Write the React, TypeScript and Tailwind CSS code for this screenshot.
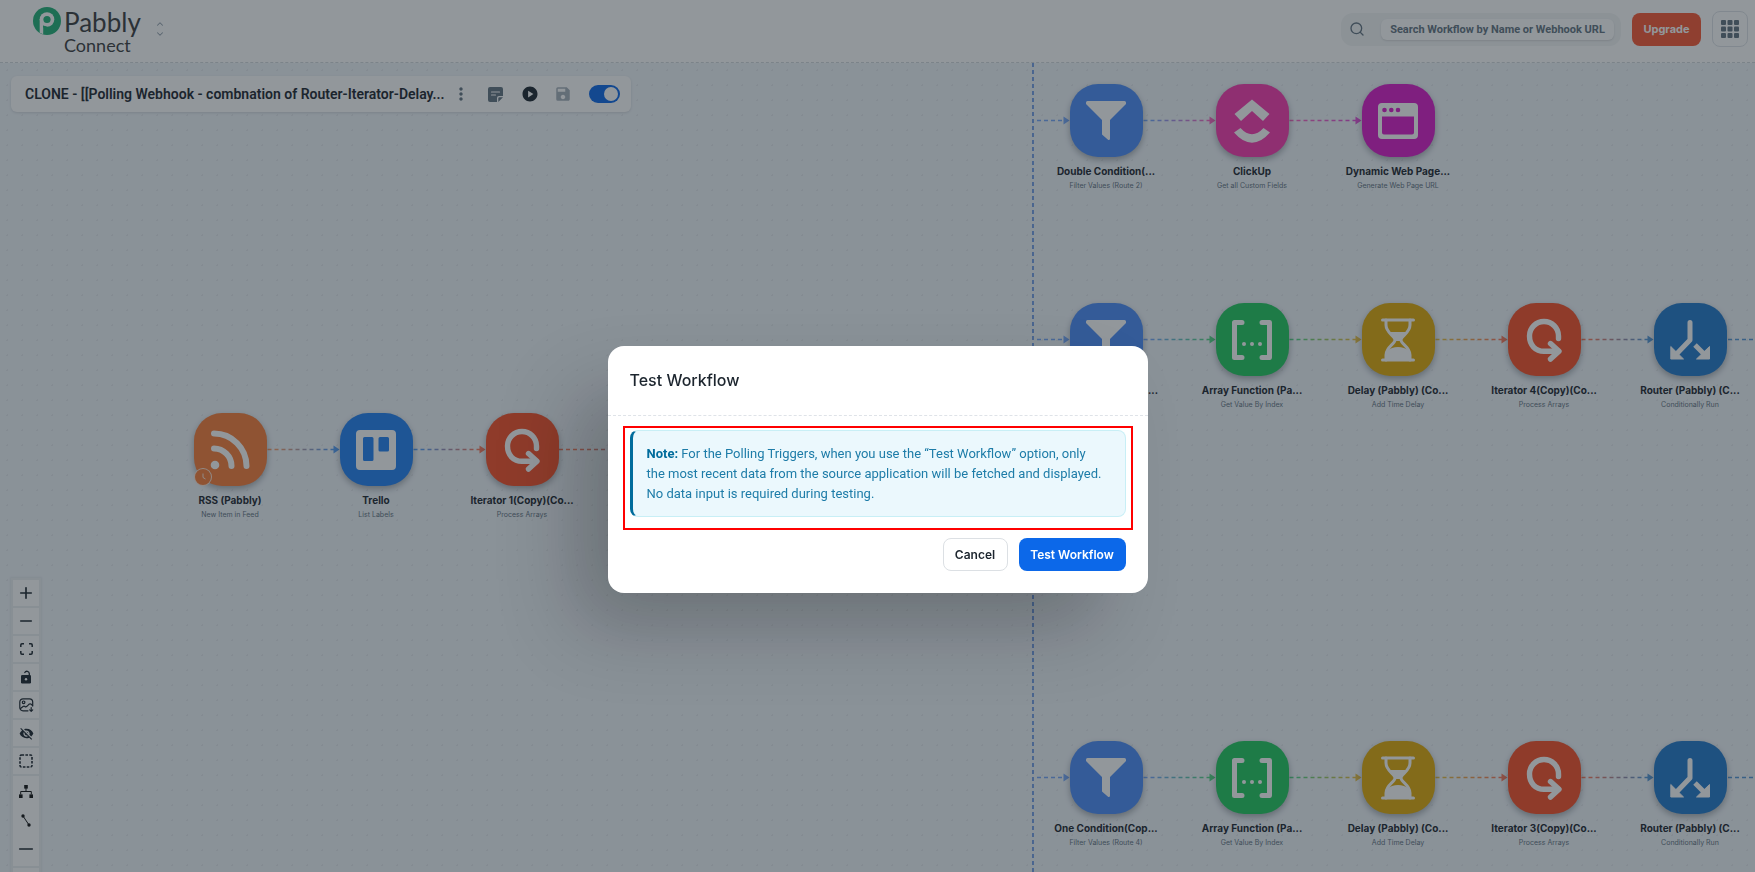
import { useState, type ReactNode } from "react";
import { ChevronDown, ChevronUp, Minus, Plus, Search } from "lucide-react";
import { MdMoreVert, MdPlayCircle, MdSave, MdVisibilityOff } from "react-icons/md";

//
// --- Canvas data ---
//

type Kind = "rss" | "trello" | "iterator" | "filter" | "clickup" | "webpage" | "array" | "delay" | "router";

interface WorkflowNode {
  id: string;
  kind: Kind;
  x: number;
  y: number;
  title: string;
  subtitle: string;
}

const COLORS: Record<Kind, string> = {
  rss: "#f97d38",
  trello: "#2280f4",
  iterator: "#f95028",
  filter: "#4c8dfa",
  clickup: "#f938af",
  webpage: "#da19ca",
  array: "#22ca5e",
  delay: "#e2ab08",
  router: "#2279cc",
};

const NODE = 73;
const TRUNK_X = 1033;

// x and y are the centre of the tile
const rows: WorkflowNode[][] = [
  [
    { id: "rss", kind: "rss", x: 230, y: 386, title: "RSS (Pabbly)", subtitle: "New Item in Feed" },
    { id: "trello", kind: "trello", x: 376, y: 386, title: "Trello", subtitle: "List Labels" },
    { id: "it1", kind: "iterator", x: 522, y: 386, title: "Iterator 1(Copy)(Co...", subtitle: "Process Arrays" },
  ],
  [
    { id: "f2", kind: "filter", x: 1106, y: 57, title: "Double Condition(...", subtitle: "Filter Values (Route 2)" },
    { id: "cu", kind: "clickup", x: 1252, y: 57, title: "ClickUp", subtitle: "Get all Custom Fields" },
    { id: "wp", kind: "webpage", x: 1398, y: 57, title: "Dynamic Web Page...", subtitle: "Generate Web Page URL" },
  ],
  [
    { id: "f3", kind: "filter", x: 1106, y: 276, title: "Two Condition(Cop...", subtitle: "Filter Values (Route 3)" },
    { id: "a3", kind: "array", x: 1252, y: 276, title: "Array Function (Pa...", subtitle: "Get Value By Index" },
    { id: "d3", kind: "delay", x: 1398, y: 276, title: "Delay (Pabbly) (Co...", subtitle: "Add Time Delay" },
    { id: "i3", kind: "iterator", x: 1544, y: 276, title: "Iterator 4(Copy)(Co...", subtitle: "Process Arrays" },
    { id: "r3", kind: "router", x: 1690, y: 276, title: "Router (Pabbly) (C...", subtitle: "Conditionally Run" },
  ],
  [
    { id: "f4", kind: "filter", x: 1106, y: 714, title: "One Condition(Cop...", subtitle: "Filter Values (Route 4)" },
    { id: "a4", kind: "array", x: 1252, y: 714, title: "Array Function (Pa...", subtitle: "Get Value By Index" },
    { id: "d4", kind: "delay", x: 1398, y: 714, title: "Delay (Pabbly) (Co...", subtitle: "Add Time Delay" },
    { id: "i4", kind: "iterator", x: 1544, y: 714, title: "Iterator 3(Copy)(Co...", subtitle: "Process Arrays" },
    { id: "r4", kind: "router", x: 1690, y: 714, title: "Router (Pabbly) (C...", subtitle: "Conditionally Run" },
  ],
];

//
// --- Icons ---
//

const GLYPHS: Record<Kind, ReactNode> = {
  rss: (
    <g fill="none" stroke="#fff" strokeWidth="6" strokeLinecap="round">
      <circle cx="5" cy="35" r="4.3" fill="#fff" stroke="none" />
      <path d="M4 18.500a17.500 17.500 0 0 1 17.500 17.500" />
      <path d="M4 3.500a32.500 32.500 0 0 1 32.500 32.500" />
    </g>
  ),
  trello: (
    <path
      fill="#fff"
      fillRule="evenodd"
      d="M4 0h32a4 4 0 0 1 4 4v32a4 4 0 0 1-4 4H4a4 4 0 0 1-4-4V4a4 4 0 0 1 4-4zM8.500 7a1.500 1.500 0 0 0-1.500 1.500v21a1.500 1.500 0 0 0 1.500 1.500h7.500a1.500 1.500 0 0 0 1.500-1.500v-21A1.500 1.500 0 0 0 16 7zM24 7a1.500 1.500 0 0 0-1.500 1.500v11.500a1.500 1.500 0 0 0 1.500 1.500h7.500A1.500 1.500 0 0 0 33 20V8.500A1.500 1.500 0 0 0 31.500 7z"
    />
  ),
  iterator: (
    <g fill="none" stroke="#fff" strokeWidth="5.400" strokeLinecap="round" strokeLinejoin="round">
      <path d="M34.500 18.500V16A14.500 14.500 0 0 0 5.500 16c0 9 6 15.300 14.500 15.300h14" />
      <path d="M26.500 23.500l8.500 7.800-8.500 7.800" />
    </g>
  ),
  filter: <path fill="#fff" d="M1.500 0h37q1.500 0 1.500 1.500v1.500L24 19v18.500q0 2-1.700 1.500L16 33.500V19L0 3V1.500Q0 0 1.500 0z" />,
  clickup: (
    <path fill="#fff" d="M20-1.500L37.500 13 31 20 20 10 9 20 2.500 13zM2 31.500L8.500 27Q20 39.500 31.500 27L38 31.500Q20 52 2 31.500z" />
  ),
  webpage: (
    <path
      fill="#fff"
      fillRule="evenodd"
      d="M4 2h32a4 4 0 0 1 4 4v28a4 4 0 0 1-4 4H4a4 4 0 0 1-4-4V6a4 4 0 0 1 4-4zM4 15.500v16a2 2 0 0 0 2 2h28a2 2 0 0 0 2-2v-16zM6.500 6.700a2.300 2.300 0 1 0 0 4.600 2.300 2.300 0 0 0 0-4.600zM13.300 6.700a2.300 2.300 0 1 0 0 4.600 2.300 2.300 0 0 0 0-4.600zM20 6.700a2.300 2.300 0 1 0 0 4.600 2.300 2.300 0 0 0 0-4.600z"
    />
  ),
  array: (
    <g fill="#fff">
      <path
        fill="none"
        stroke="#fff"
        strokeWidth="5"
        strokeLinecap="round"
        strokeLinejoin="round"
        d="M10 2.500H2.500v35H10M30 2.500h7.500v35H30"
      />
      <circle cx="12" cy="24" r="2" />
      <circle cx="20" cy="24" r="2" />
      <circle cx="28" cy="24" r="2" />
    </g>
  ),
  delay: (
    <g fill="none" stroke="#fff" strokeWidth="3" strokeLinecap="round" strokeLinejoin="round">
      <path d="M4.500 0h31M4.500 40h31" />
      <path d="M8 0v5c0 8 9 11 9 15s-9 7-9 15v5M32 0v5c0 8-9 11-9 15s9 7 9 15v5" />
      <path fill="#fff" stroke="none" d="M10 12h20c-2 4-7 5-8 9h-4c-1-4-6-5-8-9zM8 40v-8q3-3 6-4 6-2 12 0 3 1 6 4v8z" />
    </g>
  ),
  router: (
    <g fill="#fff" stroke="#fff" strokeLinejoin="round">
      <path fill="none" strokeWidth="5" strokeLinecap="round" d="M20 2.500V20L7 33.500" />
      <path fill="none" strokeWidth="5" d="M25 25l9 9" />
      <path strokeWidth="1" d="M.8 26.500v12.500H13.500zM39.500 26.500v12.500H26.500z" />
    </g>
  ),
};

function PabblyMark() {
  return (
    <svg viewBox="0 0 28 28" className="size-7" aria-hidden="true">
      <circle cx="14" cy="14" r="14" fill="#21b177" />
      <circle cx="14" cy="12.500" r="7.300" fill="#fff" />
      <path fill="#fff" d="M6.700 12h3.500v15.200l-3.500-1.400z" />
      <path fill="#21b177" d="M10.200 18.500l4 1.200-4 1z" />
      <circle cx="14" cy="12.500" r="3.600" fill="#21b177" />
    </svg>
  );
}

function NoteIcon() {
  return (
    <svg viewBox="0 0 15 15" className="size-[15px]" aria-hidden="true">
      <path
        fill="#637381"
        d="M2 0h11a2 2 0 0 1 2 2v7h-4a2 2 0 0 0-2 2v4H2a2 2 0 0 1-2-2V2a2 2 0 0 1 2-2zM10.300 15v-3.700a1 1 0 0 1 1-1H15z"
      />
      <path stroke="#fff" strokeWidth="1.200" strokeLinecap="round" d="M3.500 5h8M3.500 8h4" />
    </svg>
  );
}

function UnlockIcon() {
  return (
    <svg viewBox="0 0 12 14" className="h-3.5 w-3" aria-hidden="true">
      <path fill="none" stroke="#1c252e" strokeWidth="1.300" strokeLinecap="round" d="M9.300 5V3.500a2.400 2.400 0 0 0-4.500-1" />
      <rect x="1" y="5" width="10" height="8.500" rx="1.200" fill="#1c252e" />
      <circle cx="6" cy="9.200" r="1.200" fill="#fff" />
    </svg>
  );
}

function FitIcon() {
  return (
    <svg viewBox="0 0 13 12" className="h-3 w-[13px]" fill="none" stroke="#1c252e" strokeWidth="1.500" aria-hidden="true">
      <path d="M.8 4V2q0-1.200 1.200-1.200h2M9 .8h2q1.200 0 1.200 1.200v2M12.200 8v2q0 1.200-1.200 1.200H9M4 11.200H2Q.8 11.200.8 10V8" />
    </svg>
  );
}

function DownloadImageIcon() {
  return (
    <svg viewBox="0 0 15 14" className="h-3.5 w-[15px]" fill="none" stroke="#1c252e" strokeWidth="1.200" strokeLinecap="round" strokeLinejoin="round" aria-hidden="true">
      <path d="M9 12.800H4A3.200 3.200 0 0 1 .8 9.600V4A3.200 3.200 0 0 1 4 .8h6.500A3.200 3.200 0 0 1 13.700 4v4" />
      <circle cx="4.600" cy="4.300" r="1.300" />
      <path d="M1.500 10.500l2.600-2q1-.7 1.800 0 .9.800 2-.2l2-2q1.200-1 2.400 0l1.200 1.200" />
      <path d="M12.200 9.500v3.500M10.700 11.800l1.500 1.500 1.500-1.500" />
    </svg>
  );
}

function SelectionIcon() {
  return (
    <svg viewBox="0 0 14 14" className="size-3.5" aria-hidden="true">
      <rect x="1" y="1" width="12" height="12" rx="1.500" fill="none" stroke="#1c252e" strokeWidth="1.600" strokeDasharray="2.600 1.300" />
    </svg>
  );
}

function TreeIcon() {
  return (
    <svg viewBox="0 0 14 13" className="h-[13px] w-3.5" fill="#111" aria-hidden="true">
      <rect x="5.200" width="3.600" height="3.600" />
      <rect y="9.400" width="3.600" height="3.600" />
      <rect x="10.400" y="9.400" width="3.600" height="3.600" />
      <path fill="none" stroke="#111" d="M7 3v3.500M1.700 9.500v-3h10.600v3" />
    </svg>
  );
}

function EdgeIcon() {
  return (
    <svg viewBox="0 0 10 13" className="h-[13px] w-2.5" fill="#111" aria-hidden="true">
      <circle cx="2" cy="2" r="1.700" />
      <circle cx="8" cy="11" r="1.700" />
      <path stroke="#111" d="M2 2l6 9" />
    </svg>
  );
}

function AppsIcon() {
  return (
    <svg viewBox="0 0 18 18" className="size-[18px]" fill="#637381" aria-hidden="true">
      {[0, 6.5, 13].map((y) => [0, 6.5, 13].map((x) => <rect key={`${x}-${y}`} x={x} y={y} width="5" height="5" rx="1" />))}
    </svg>
  );
}

//
// --- Canvas parts ---
//

function Edge({ id, from, to, x1, x2, y, arrow = true }: { id: string; from: string; to: string; x1: number; x2: number; y: number; arrow?: boolean }) {
  return (
    <g opacity="0.75">
      <linearGradient id={id} gradientUnits="userSpaceOnUse" x1={x1} x2={x2} y1={y} y2={y}>
        <stop offset="0.1" stopColor={from} />
        <stop offset="0.9" stopColor={to} />
      </linearGradient>
      <path d={`M${x1} ${y}H${arrow ? x2 - 4 : x2}`} stroke={`url(#${id})`} strokeWidth="1.600" strokeDasharray="4 3" />
      {arrow && <path d={`M${x2 - 6} ${y - 4}L${x2} ${y}L${x2 - 6} ${y + 4}z`} fill={to} />}
    </g>
  );
}

function Edges() {
  const half = NODE / 2;
  return (
    <svg className="absolute inset-0 size-full" aria-hidden="true">
      <path d={`M${TRUNK_X} 0V900`} stroke="#3f7be0" strokeWidth="1.600" strokeDasharray="4 3" opacity="0.85" />
      {rows.map((row, r) =>
        row.map((node, i) => {
          const prev = row[i - 1];
          if (!prev) {
            return r === 0 ? null : (
              <Edge key={node.id} id={`e-${node.id}`} from={COLORS.filter} to={COLORS.filter} x1={TRUNK_X + 4} x2={node.x - half} y={node.y + 0.5} />
            );
          }
          return (
            <Edge key={node.id} id={`e-${node.id}`} from={COLORS[prev.kind]} to={COLORS[node.kind]} x1={prev.x + half + 1} x2={node.x - half} y={node.y + 0.5} />
          );
        })
      )}
      <Edge id="e-trunk" from={COLORS.iterator} to={COLORS.router} x1={559} x2={700} y={386.5} arrow={false} />
      <Edge id="e-out3" from={COLORS.router} to={COLORS.router} x1={1728} x2={2400} y={276.5} arrow={false} />
      <Edge id="e-out4" from={COLORS.router} to={COLORS.router} x1={1728} x2={2400} y={714.5} arrow={false} />
    </svg>
  );
}

function NodeTile({ node }: { node: WorkflowNode }) {
  return (
    <div className="absolute flex w-36 -translate-x-1/2 flex-col items-center" style={{ left: node.x, top: node.y - 36 }}>
      <div
        className="relative flex size-[73px] items-center justify-center rounded-[28px] shadow-[0_3px_6px_rgba(28,37,46,0.35)]"
        style={{ backgroundColor: COLORS[node.kind] }}
      >
        <svg viewBox="0 0 40 40" className="size-10 overflow-visible" aria-hidden="true">
          {GLYPHS[node.kind]}
        </svg>
        {node.kind === "rss" && (
          <span className="absolute bottom-0 left-0 flex size-[18px] items-center justify-center rounded-full border border-white/80 bg-[#f97d38]">
            <svg viewBox="0 0 8 8" className="size-2" fill="none" stroke="#fff" strokeWidth="0.800" aria-hidden="true">
              <path d="M4 .5V4.500L6.500 6" />
            </svg>
          </span>
        )}
      </div>
      <p className="mt-[7px] text-[10px] leading-[14px] font-bold whitespace-nowrap text-[#1c252e]">{node.title}</p>
      <p className="mt-[3px] text-[7px] leading-[10px] whitespace-nowrap text-[#637381]">{node.subtitle}</p>
    </div>
  );
}

function ControlButton({ label, children }: { label: string; children: ReactNode }) {
  return (
    <button type="button" aria-label={label} className="flex h-[26px] w-[26px] items-center justify-center bg-white text-[#1c252e]">
      {children}
    </button>
  );
}

function CanvasControls() {
  return (
    <div className="absolute top-[515px] left-[11px] flex flex-col gap-0.5 bg-[#eceff2] p-0.5 shadow-[0_0_2px_1px_rgba(0,0,0,0.06)]">
      <ControlButton label="Zoom in"><Plus size={18} strokeWidth={2.2} /></ControlButton>
      <ControlButton label="Zoom out"><Minus size={18} strokeWidth={2.2} /></ControlButton>
      <ControlButton label="Fit view"><FitIcon /></ControlButton>
      <ControlButton label="Unlock canvas"><UnlockIcon /></ControlButton>
      <ControlButton label="Download image"><DownloadImageIcon /></ControlButton>
      <ControlButton label="Hide details"><MdVisibilityOff size={15} /></ControlButton>
      <ControlButton label="Select area"><SelectionIcon /></ControlButton>
      <div className="flex flex-col gap-[3px] bg-white pt-0.5 pb-1">
        <ControlButton label="Tree layout"><TreeIcon /></ControlButton>
        <ControlButton label="Edge style"><EdgeIcon /></ControlButton>
        <ControlButton label="Straight edge"><Minus size={22} strokeWidth={1.4} /></ControlButton>
      </div>
      <ControlButton label="More"><span /></ControlButton>
    </div>
  );
}

//
// --- Page sections ---
//

function Header() {
  return (
    <header className="flex h-[63px] shrink-0 items-center justify-between border-b border-dashed border-[#d3d8dd] bg-white pr-[7px] pb-1 pl-[33px]">
      <div className="flex items-center gap-3.5">
        <a href="#" aria-label="Pabbly Connect" className="flex gap-[3px] pt-0.5 font-['Lato',sans-serif] text-[#3b3d40]">
          <PabblyMark />
          <span className="flex flex-col">
            <span className="text-[26px] leading-[30px]">Pabbly</span>
            <span className="text-lg leading-4">Connect</span>
          </span>
        </a>
        <button type="button" aria-label="Switch app" className="flex flex-col items-center text-[#919eab]">
          <ChevronUp size={10} strokeWidth={2.5} />
          <ChevronDown size={10} strokeWidth={2.5} />
        </button>
      </div>

      <div className="flex items-center gap-[11px]">
        <div className="flex h-[33px] w-[280px] items-center rounded-xl bg-[#f3f5f6] pr-[7px] pl-2">
          <Search size={16} strokeWidth={2} className="shrink-0 text-[#637381]" />
          <input
            type="text"
            aria-label="Search workflow"
            placeholder="Search Workflow by Name or Webhook URL"
            className="ml-4 h-[21px] min-w-0 flex-1 rounded-md bg-white px-1 text-center font-['Roboto',sans-serif] text-[11px] font-bold shadow-[0_1px_2px_rgba(0,0,0,0.12)] placeholder:text-[#637381]"
          />
        </div>
        <button type="button" className="h-[33px] w-[69px] rounded-lg bg-[#f95733] text-[11px] font-bold text-white">
          Upgrade
        </button>
        <button type="button" aria-label="Apps" className="flex size-9 items-center justify-center rounded-lg border border-[#dfe3e8]">
          <AppsIcon />
        </button>
      </div>
    </header>
  );
}

function WorkflowBar() {
  const [enabled, setEnabled] = useState(true);

  return (
    <div className="relative mt-[13px] ml-[11px] flex h-9 w-fit items-center rounded-md bg-white pr-[11px] pl-3.5 shadow-[0_1px_3px_rgba(0,0,0,0.12)]">
      <h1 className="w-[424px] truncate font-['Roboto',sans-serif] text-sm font-semibold text-[#1c252e]">
        CLONE - [[Polling Webhook - combnation of Router-Iterator-Delay...
      </h1>
      <div className="ml-1 flex items-center gap-[19px]">
        <button type="button" aria-label="More options" className="flex w-4 justify-center text-[#637381]">
          <MdMoreVert size={20} className="shrink-0" />
        </button>
        <button type="button" aria-label="Notes">
          <NoteIcon />
        </button>
        <button type="button" aria-label="Run workflow" className="flex w-[15px] justify-center text-[#1c252e]">
          <MdPlayCircle size={18} className="shrink-0" />
        </button>
        <button type="button" aria-label="Save" className="flex w-3.5 justify-center text-[#a6b0ba]">
          <MdSave size={18} className="shrink-0" />
        </button>
        <input
          type="checkbox"
          aria-label="Workflow enabled"
          checked={enabled}
          onChange={() => setEnabled(!enabled)}
          className="flex h-[18px] w-[31px] appearance-none items-center rounded-full bg-[#c4cdd5] px-0.5 before:size-3.5 before:rounded-full before:bg-white checked:justify-end checked:bg-[#0c68e9]"
        />
      </div>
    </div>
  );
}

function TestWorkflowDialog({ onClose }: { onClose: () => void }) {
  return (
    <div className="fixed inset-0 flex items-center justify-center bg-[#1c252e]/48 pt-[67px]">
      <div
        role="dialog"
        aria-modal="true"
        aria-labelledby="dialog-title"
        className="w-full max-w-[540px] rounded-2xl bg-white pb-[22px] shadow-[-40px_40px_80px_-8px_rgba(0,0,0,0.24)]"
      >
        <h2 id="dialog-title" className="border-b border-dashed border-[#dfe3e8] px-[22px] pt-[22px] pb-[23px] text-base font-medium text-[#1c252e]">
          Test Workflow
        </h2>
        <div className="mx-[15px] mt-2.5 border-2 border-[#ff0000] px-[5px] pt-0.5 pb-[11px]">
          <p className="rounded-lg border border-l-[3px] border-[#c8eff6] border-l-[#006c9c] bg-[#ebf8fd] pt-[13px] pr-5 pb-3 pl-3.5 font-['Roboto',sans-serif] text-[13px] leading-5 text-[#1d7ca8]">
            <strong className="font-bold text-[#006c9c]">Note:</strong> For the Polling Triggers, when you use the “Test Workflow” option, only
            the most recent data from the source application will be fetched and displayed. No data input is required during testing.
          </p>
        </div>
        <div className="mt-2 flex justify-end gap-[11px] pr-[22px]">
          <button type="button" onClick={onClose} className="h-[33px] w-[65px] rounded-lg border border-[#dce0e4] text-xs font-semibold text-[#1c252e]">
            Cancel
          </button>
          <button type="button" onClick={onClose} className="h-[33px] w-[107px] rounded-lg bg-[#0c68e9] text-xs font-semibold text-white">
            Test Workflow
          </button>
        </div>
      </div>
    </div>
  );
}

export default function App() {
  const [dialogOpen, setDialogOpen] = useState(true);

  return (
    <div className="flex h-screen flex-col overflow-hidden font-['Inter',sans-serif]">
      <Header />
      <main className="relative min-h-0 flex-1 overflow-hidden bg-[#f0f5fa] bg-[radial-gradient(circle,#e5e9ee_1px,transparent_1px)] bg-[size:15px_15px]">
        <Edges />
        {rows.flat().map((node) => (
          <NodeTile key={node.id} node={node} />
        ))}
        <WorkflowBar />
        <CanvasControls />
      </main>
      {dialogOpen && <TestWorkflowDialog onClose={() => setDialogOpen(false)} />}
    </div>
  );
}
